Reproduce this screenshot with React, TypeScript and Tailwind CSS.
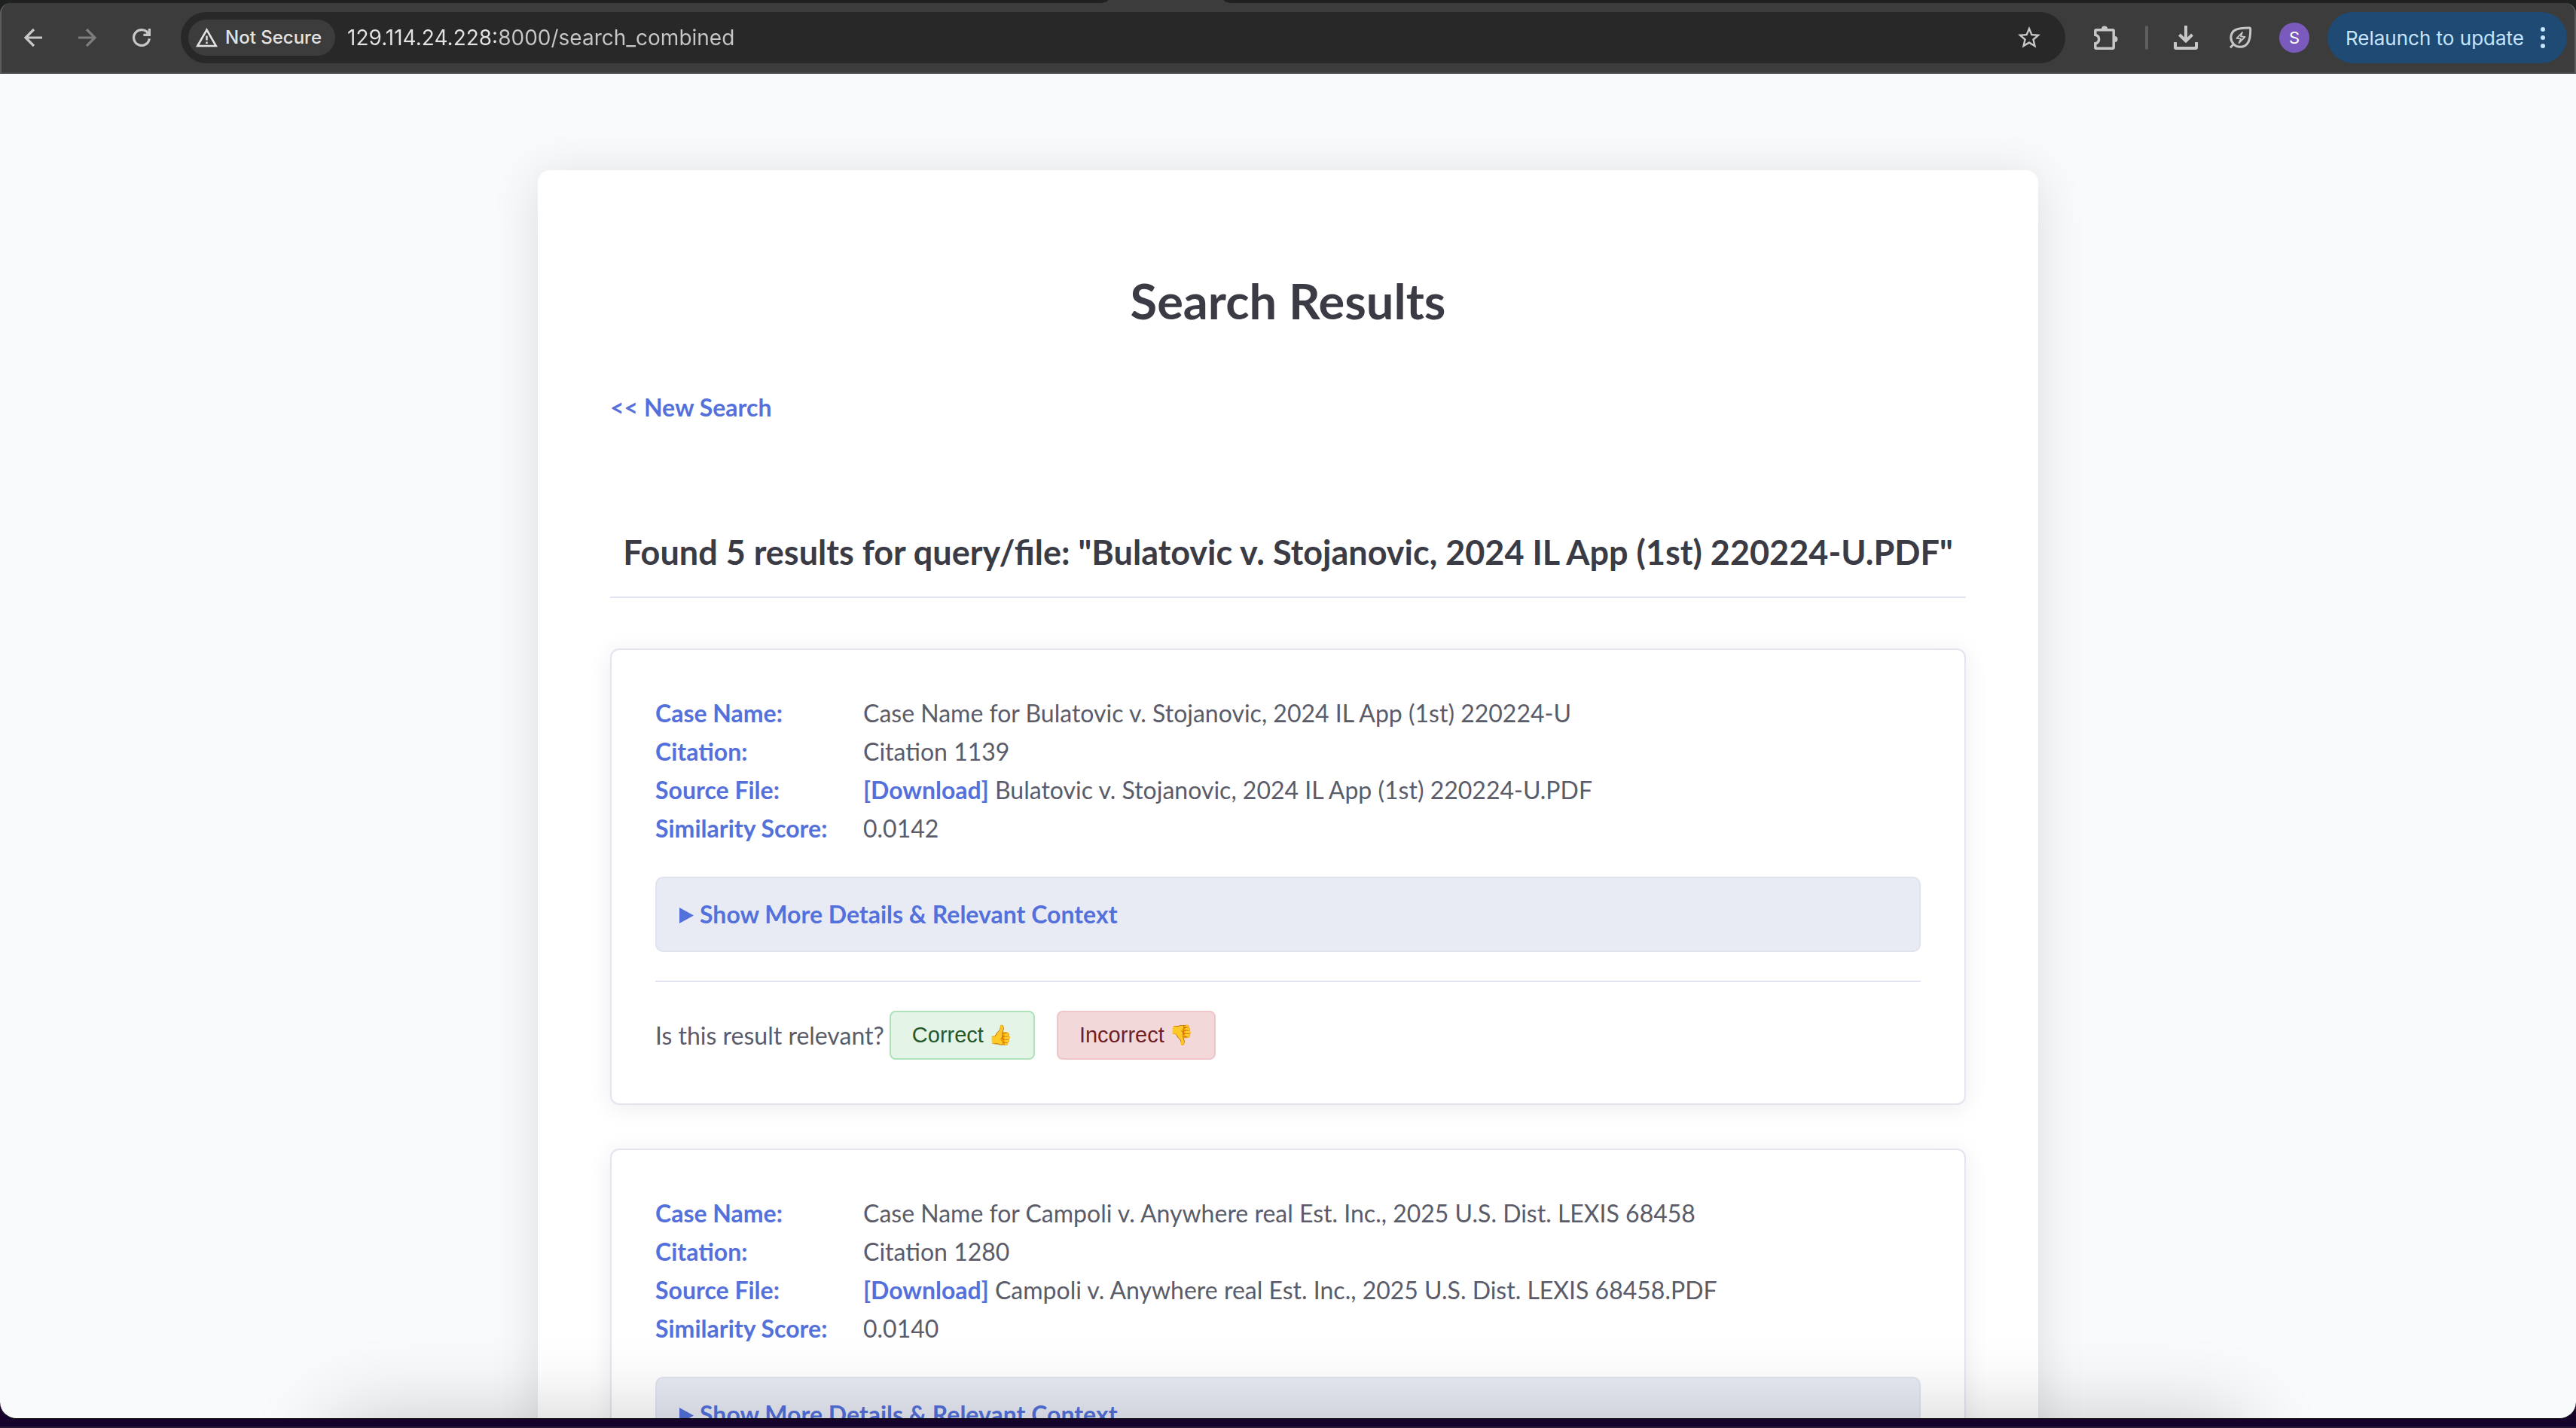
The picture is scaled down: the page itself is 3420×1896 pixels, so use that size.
import type { ReactNode } from "react";

type Result = {
  caseName: string;
  citation: string;
  file: string;
  score: string;
};

const results: Result[] = [
  {
    caseName: "Case Name for Bulatovic v. Stojanovic, 2024 IL App (1st) 220224-U",
    citation: "Citation 1139",
    file: "Bulatovic v. Stojanovic, 2024 IL App (1st) 220224-U.PDF",
    score: "0.0142",
  },
  {
    caseName: "Case Name for Campoli v. Anywhere real Est. Inc., 2025 U.S. Dist. LEXIS 68458",
    citation: "Citation 1280",
    file: "Campoli v. Anywhere real Est. Inc., 2025 U.S. Dist. LEXIS 68458.PDF",
    score: "0.0140",
  },
];

function ArrowIcon({ className }: { className: string }) {
  return (
    <svg viewBox="0 0 24 24" className={className} fill="none" stroke="currentColor" strokeWidth="3.2">
      <path d="M24 12H2.5M13 1 2 12l11 11" />
    </svg>
  );
}

function ReloadIcon() {
  return (
    <svg viewBox="0 0 24 24" className="size-6 overflow-visible" fill="none" stroke="currentColor" strokeWidth="3.2">
      <path d="M22.3 13.2A10.4 10.4 0 1 1 20.6 6.2" />
      <path d="M22.4 0v8.4h-8" />
      <path d="M22 3.5v5h-6z" fill="currentColor" stroke="none" />
    </svg>
  );
}

function WarningIcon() {
  return (
    <svg viewBox="0 0 29 26" className="h-[26px] w-[29px]" fill="none" stroke="currentColor" strokeWidth="2.6">
      <path d="M14.5 2.6 26.8 24H2.2z" />
      <path d="M14.5 10.5v6M14.5 18.4v2.6" strokeWidth="2.4" />
    </svg>
  );
}

function StarIcon() {
  return (
    <svg viewBox="0 0 24 24" className="size-9" fill="currentColor">
      <path d="M22 9.24l-7.19-.62L12 2 9.19 8.63 2 9.24l5.46 4.73L5.82 21 12 17.27 18.18 21l-1.63-7.03L22 9.24zM12 15.4l-3.76 2.27 1-4.28-3.32-2.88 4.38-.38L12 6.1l1.71 4.04 4.38.38-3.32 2.88 1 4.28L12 15.4z" />
    </svg>
  );
}

function ExtensionsIcon() {
  return (
    <svg viewBox="0 0 32 32" className="size-8" fill="none" stroke="currentColor" strokeWidth="3.5">
      <path d="M1.8 7q0-1.3 1.3-1.3h21.8q1.3 0 1.3 1.3v22q0 1.3-1.3 1.3H3.1q-1.3 0-1.3-1.3v-5.2a5.9 5.9 0 0 0 0-11.6z" />
      <path d="M10 4.5a4 4 0 0 1 8 0zM27.5 14a4 4 0 0 1 0 8z" fill="currentColor" stroke="none" />
    </svg>
  );
}

function DownloadIcon() {
  return (
    <svg viewBox="0 0 32 32" className="size-8" fill="none" stroke="currentColor" strokeWidth="4">
      <path d="M16 0v20M7.5 12l8.5 8.5 8.5-8.5" />
      <path d="M2 22v6.8q0 1.2 1.2 1.2h25.6q1.2 0 1.2-1.2V22" />
    </svg>
  );
}

function LeafIcon() {
  return (
    <svg viewBox="0 0 30 30" className="size-[30px]" fill="none" stroke="currentColor" strokeWidth="3">
      <path d="M5.5 23.5C-.5 17 .5 5 13 3c5-.8 9-1 13-1 1.2 0 1.7.5 1.7 1.7C28 19 24 27.3 14 27.3c-3.5 0-6.3-1.3-8.5-3.8zL1 28.3" />
      <path d="M17 8 9.5 15.8l5.5.6L12.5 22l8-8-5.5-.7z" strokeWidth="1.8" strokeLinejoin="round" />
    </svg>
  );
}

function BrowserBar() {
  return (
    <header className="shrink-0 bg-[#1e2120] font-[Inter,sans-serif]">
      <div className="flex h-1 bg-[#3c3c3c]">
        <div className="w-[43%] rounded-br-[12px_4px] bg-[#1e2120]" />
        <div className="w-[154px]" />
        <div className="flex-1 rounded-bl-[12px_4px] bg-[#1e2120]" />
      </div>
      <div className="flex h-[94px] items-center rounded-t-[14px] border-x-2 border-b-2 border-x-[#5c5d5d] border-b-[#484a4b] bg-[#3c3c3c] pr-[10px] pl-[30px] text-[#c7c7c7]">
        <button type="button" aria-label="Back" className="mr-12">
          <ArrowIcon className="size-6 overflow-visible" />
        </button>
        <button type="button" aria-label="Forward" className="mr-12 text-[#7d7d7d]">
          <ArrowIcon className="size-6 rotate-180 overflow-visible" />
        </button>
        <button type="button" aria-label="Reload" className="mr-10">
          <ReloadIcon />
        </button>
        <div className="flex h-[68px] flex-1 items-center rounded-full bg-[#282828] pr-[30px] pl-[10px]">
          <button
            type="button"
            className="flex h-12 items-center gap-[10px] rounded-full bg-[#3c3c3c] px-[10px] text-2xl font-medium text-[#e3e3e3]"
          >
            <WarningIcon />
            <span className="pr-2 whitespace-nowrap">Not Secure</span>
          </button>
          <input
            type="text"
            aria-label="Address"
            defaultValue="129.114.24.228:8000/search_combined"
            className="ml-4 h-12 min-w-0 flex-1 bg-[linear-gradient(to_right,#e3e3e3_200px,#c7c7c7_200px)] bg-clip-text text-[28px] text-transparent outline-none"
          />
          <button type="button" aria-label="Bookmark this page">
            <StarIcon />
          </button>
        </div>
        <button type="button" aria-label="Extensions" className="ml-[38px]">
          <ExtensionsIcon />
        </button>
        <div className="mr-[34px] ml-9 h-8 w-1 rounded-full bg-[#5e5e5e]" />
        <button type="button" aria-label="Downloads" className="mr-[42px]">
          <DownloadIcon />
        </button>
        <button type="button" aria-label="Energy saver" className="mr-9">
          <LeafIcon />
        </button>
        <button
          type="button"
          aria-label="Profile"
          className="mr-6 flex size-10 items-center justify-center rounded-full bg-[#7a5bbd] text-[22px] text-white"
        >
          S
        </button>
        <button
          type="button"
          className="flex h-[68px] items-center rounded-full bg-[#1e4a73] pr-[29px] pl-6 text-[26px] text-[#c5e4fb]"
        >
          <span className="whitespace-nowrap">Relaunch to update</span>
          <svg viewBox="0 0 6 28" className="ml-[22px] h-7 w-[6px]" fill="currentColor">
            <circle cx="3" cy="3" r="3" />
            <circle cx="3" cy="14" r="3" />
            <circle cx="3" cy="25" r="3" />
          </svg>
        </button>
      </div>
    </header>
  );
}

function Field({ label, children }: { label: string; children: ReactNode }) {
  return (
    <>
      <dt className="font-bold text-[#5471db]">{label}</dt>
      <dd>{children}</dd>
    </>
  );
}

function ResultCard({ result }: { result: Result }) {
  return (
    <article className="rounded-xl border-2 border-[#e2e5f0] bg-white p-[58px] shadow-[0_4px_32px_rgba(0,0,0,0.08)]">
      <dl className="grid grid-cols-[276px_1fr]">
        <Field label="Case Name:">{result.caseName}</Field>
        <Field label="Citation:">{result.citation}</Field>
        <Field label="Source File:">
          <a href="#download" className="font-bold text-[#5471db]">
            [Download]
          </a>{" "}
          {result.file}
        </Field>
        <Field label="Similarity Score:">{result.score}</Field>
      </dl>
      <details className="group mt-[39px] rounded-[10px] border-2 border-[#e1e4ef] bg-[#e8ebf4] px-[30px] pt-[22px] pb-[23px]">
        <summary className="flex cursor-pointer list-none items-center gap-2 font-bold text-[#5471db]">
          <svg viewBox="0 0 19 21" className="mt-[3px] h-[21px] w-[19px] group-open:rotate-90" fill="currentColor">
            <path d="M0 0 19 10.500 0 21z" />
          </svg>
          Show More Details &amp; Relevant Context
        </summary>
      </details>
      <div className="mt-[38px] flex items-center border-t-2 border-[#e2e5f0] pt-[38px]">
        <span>Is this result relevant?</span>
        <button
          type="button"
          className="ml-[7px] flex h-[65px] items-center gap-[6px] rounded-lg border-2 border-[#aee2b9] bg-[#e4f4e7] px-7 font-['Liberation_Sans',Arial,sans-serif] text-[29px] text-[#23592b]"
        >
          Correct <span className="text-[26px]">👍</span>
        </button>
        <button
          type="button"
          className="ml-[29px] flex h-[65px] items-center gap-[6px] rounded-lg border-2 border-[#f0c5ca] bg-[#f3d8da] px-7 font-['Liberation_Sans',Arial,sans-serif] text-[29px] text-[#6f1f28]"
        >
          Incorrect <span className="text-[26px]">👎</span>
        </button>
      </div>
    </article>
  );
}

export default function App() {
  return (
    <div className="flex h-screen flex-col overflow-hidden bg-[#16022a]">
      <BrowserBar />
      <div className="relative flex-1 overflow-hidden rounded-b-[22px] border-b border-black bg-[#f8fafc]">
        <main className="mx-auto mt-32 max-w-[1992px] rounded-2xl bg-white px-24 pt-[134px] pb-24 font-[Lato,sans-serif] text-[32px] leading-[51px] text-[#5a5c69] shadow-[0_8px_64px_rgba(0,0,0,0.12)]">
          <h1 className="text-center text-[65px] leading-[78px] font-bold text-[#3a3b45]">Search Results</h1>
          <a href="#search" className="mt-[77px] block w-fit font-bold text-[#5471db]">
            &lt;&lt; New Search
          </a>
          <h2 className="mt-[131px] border-b-2 border-[#e2e5f0] pb-[23px] text-center text-[45px] leading-[72px] font-bold text-[#3a3b45]">
            Found 5 results for query/file: "Bulatovic v. Stojanovic, 2024 IL App (1st) 220224-U.PDF"
          </h2>
          <div className="mt-[67px] flex flex-col gap-[58px]">
            {results.map((result) => (
              <ResultCard key={result.file} result={result} />
            ))}
          </div>
        </main>
        <div className="pointer-events-none absolute inset-x-[440px] top-full h-40 shadow-[0_0_110px_rgba(0,0,0,0.2)]" />
      </div>
      <div className="h-3 shrink-0 border-b-2 border-[#2a1a38]" />
    </div>
  );
}
